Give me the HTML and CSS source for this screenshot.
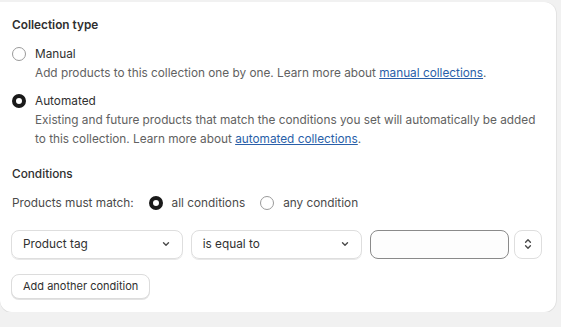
FILE: index.html
```html
<!DOCTYPE html>
<html lang="en">
  <head>
    <meta charset="UTF-8">
    <title>Collection type</title>
    <link rel="stylesheet" href="styles.css">
  </head>
  <body>
    <div class="card">
      <h2 class="title">Collection type</h2>

      <div class="option">
        <label class="radio-row">
          <span class="radio"></span>
          <span>Manual</span>
        </label>
        <p class="help">Add products to this collection one by one. Learn more about <a href="#">manual collections</a>.</p>
      </div>

      <div class="option">
        <label class="radio-row">
          <span class="radio checked"></span>
          <span>Automated</span>
        </label>
        <p class="help">Existing and future products that match the conditions you set will automatically be added to this collection. Learn more about <a href="#">automated collections</a>.</p>
      </div>

      <h3 class="subtitle">Conditions</h3>

      <div class="match-row">
        <span class="match-label">Products must match:</span>
        <label class="radio-row">
          <span class="radio checked"></span>
          <span>all conditions</span>
        </label>
        <label class="radio-row">
          <span class="radio"></span>
          <span>any condition</span>
        </label>
      </div>

      <div class="condition-row">
        <div class="select">
          <span>Product tag</span>
          <svg width="10" height="10" viewBox="0 0 10 10"><path d="M2.5 3.8 5 6.3 7.5 3.8" fill="none" stroke="#4a4a4a" stroke-width="1.4" stroke-linecap="round" stroke-linejoin="round"/></svg>
        </div>
        <div class="select">
          <span>is equal to</span>
          <svg width="10" height="10" viewBox="0 0 10 10"><path d="M2.5 3.8 5 6.3 7.5 3.8" fill="none" stroke="#4a4a4a" stroke-width="1.4" stroke-linecap="round" stroke-linejoin="round"/></svg>
        </div>
        <div class="text-input"></div>
        <div class="stepper">
          <svg width="10" height="14" viewBox="0 0 10 14"><path d="M2.6 5.2 5 2.8 7.4 5.2M2.6 8.8 5 11.2 7.4 8.8" fill="none" stroke="#4a4a4a" stroke-width="1.4" stroke-linecap="round" stroke-linejoin="round"/></svg>
        </div>
      </div>

      <button class="button">Add another condition</button>
    </div>
  </body>
</html>
```

FILE: styles.css
```css
body {
  background: #f1f1f1;
  font-family: 'Inter', sans-serif;
  font-size: 11.8px;
  color: #303030;
  margin: 0;
  padding: 2px 0 0 0;
}
.card {
  background: white;
  width: 556px;
  height: 310px;
  box-sizing: border-box;
  padding: 13px 14px 0 11px;
  border-radius: 0 12px 12px 12px;
  box-shadow: 0 1px 0 #dcdcdc, 1px 0 0 #e3e3e3;
}
.title {
  font-size: 11.8px;
  font-weight: 600;
  margin: 0 0 9px 1px;
  line-height: 20px;
}
.option {
  margin-bottom: 7px;
}
.radio-row {
  display: flex;
  align-items: center;
  gap: 9px;
  line-height: 20px;
}
.radio {
  width: 12px;
  height: 12px;
  margin-left: 1px;
  border: 1px solid #9a9a9a;
  border-radius: 50%;
  box-sizing: content-box;
  flex: none;
}
.radio.checked {
  width: 6px;
  height: 6px;
  border: 4px solid #1a1a1a;
}
.help {
  margin: 0 0 0 24px;
  color: #616161;
  line-height: 19.5px;
}
.help a {
  color: #2a5fa9;
  text-decoration: underline;
}
.subtitle {
  font-size: 11.8px;
  font-weight: 500;
  margin: 14px 0 9px 1px;
  line-height: 20px;
}
.match-row {
  display: flex;
  align-items: center;
  gap: 14px;
  color: #4a4a4a;
  line-height: 20px;
  margin-left: 1px;
}
.condition-row {
  display: flex;
  gap: 8px;
  margin-top: 17px;
  height: 29px;
}
.select {
  width: 173px;
  box-sizing: border-box;
  border: 1px solid #dedede;
  border-radius: 8px;
  display: flex;
  align-items: center;
  justify-content: space-between;
  padding: 0 11px 0 11px;
  box-shadow: 0 1px 0 #e8e8e8;
}
.text-input {
  width: 140px;
  box-sizing: border-box;
  border: 1px solid #8a8a8a;
  border-radius: 8px;
  background: #fdfdfd;
}
.stepper {
  width: 28px;
  margin-left: -3px;
  box-sizing: border-box;
  border: 1px solid #dedede;
  border-radius: 8px;
  display: flex;
  align-items: center;
  justify-content: center;
}
.button {
  margin-top: 15px;
  font-family: 'Inter', sans-serif;
  font-size: 11px;
  color: #303030;
  background: white;
  border: 1px solid #dcdcdc;
  border-radius: 8px;
  padding: 0 11px;
  height: 25px;
  box-shadow: 0 1px 0 #e3e3e3;
}
```
